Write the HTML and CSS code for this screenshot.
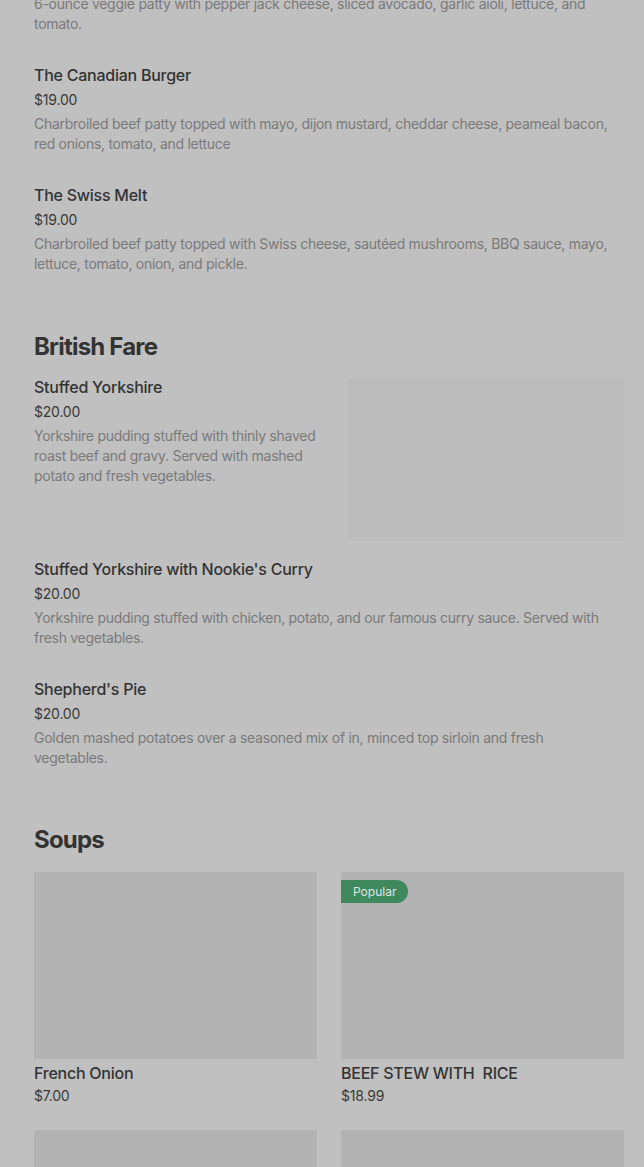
FILE: index.html
```html
<!DOCTYPE html>
<html>
<head>
<meta charset="utf-8">
<link rel="stylesheet" href="styles.css">
</head>
<body>
<main class="menu">
  <section class="section">
    <div class="item item-partial">
      <p class="desc">6-ounce veggie patty with pepper jack cheese, sliced avocado, garlic aioli, lettuce, and tomato.</p>
    </div>
    <div class="item">
      <h3 class="name">The Canadian Burger</h3>
      <div class="price">$19.00</div>
      <p class="desc">Charbroiled beef patty topped with mayo, dijon mustard, cheddar cheese, peameal bacon, red onions, tomato, and lettuce</p>
    </div>
    <div class="item">
      <h3 class="name">The Swiss Melt</h3>
      <div class="price">$19.00</div>
      <p class="desc">Charbroiled beef patty topped with Swiss cheese, sautéed mushrooms, BBQ sauce, mayo, lettuce, tomato, onion, and pickle.</p>
    </div>
  </section>

  <section class="section section-british">
    <h2 class="heading">British Fare</h2>
    <div class="item item-img">
      <div class="item-text">
        <h3 class="name">Stuffed Yorkshire</h3>
        <div class="price">$20.00</div>
        <p class="desc">Yorkshire pudding stuffed with thinly shaved roast beef and gravy. Served with mashed potato and fresh vegetables.</p>
      </div>
      <div class="thumb"></div>
    </div>
    <div class="item">
      <h3 class="name">Stuffed Yorkshire with Nookie's Curry</h3>
      <div class="price">$20.00</div>
      <p class="desc">Yorkshire pudding stuffed with chicken, potato, and our famous curry sauce. Served with fresh vegetables.</p>
    </div>
    <div class="item">
      <h3 class="name">Shepherd's Pie</h3>
      <div class="price">$20.00</div>
      <p class="desc">Golden mashed potatoes over a seasoned mix of in, minced top sirloin and fresh vegetables.</p>
    </div>
  </section>

  <section class="section section-soups">
    <h2 class="heading">Soups</h2>
    <div class="grid">
      <div class="card">
        <div class="card-img"></div>
        <h3 class="name card-name">French Onion</h3>
        <div class="price">$7.00</div>
      </div>
      <div class="card">
        <div class="card-img"><span class="badge">Popular</span></div>
        <h3 class="name card-name">BEEF STEW WITH&nbsp; RICE</h3>
        <div class="price">$18.99</div>
      </div>
      <div class="card">
        <div class="card-img"></div>
      </div>
      <div class="card">
        <div class="card-img"></div>
      </div>
    </div>
  </section>
</main>
</body>
</html>
```

FILE: styles.css
```css
* { box-sizing: border-box; }
html, body {
  margin: 0;
  padding: 0;
  background: #c0c0c0;
  overflow: hidden;
}
body {
  font-family: "Inter", "Liberation Sans", sans-serif;
  color: #333333;
}
.menu {
  padding: 0 20px 0 34px;
  margin-top: -6px;
}
.section {
  display: flex;
  flex-direction: column;
}
.section-british {
  margin-top: 28px;
}
.section-soups {
  margin-top: 27px;
}
.heading {
  margin: 0 0 12px;
  font-size: 24px;
  line-height: 32px;
  font-weight: 700;
  color: #333333;
  letter-spacing: -0.8px;
}
.section-soups .heading {
  margin-bottom: 16px;
}
.item {
  padding-bottom: 29px;
}
.name {
  margin: 0 0 3px;
  font-size: 16px;
  line-height: 24px;
  font-weight: 500;
  color: #333333;
  letter-spacing: -0.25px;
}
.price {
  font-size: 14px;
  line-height: 20px;
  color: #3a3a3a;
  margin-bottom: 4px;
  letter-spacing: -0.2px;
}
.desc {
  margin: 0;
  max-width: 578px;
  font-size: 14px;
  line-height: 20px;
  color: #7a7a7a;
  letter-spacing: -0.28px;
}
.item-img {
  display: flex;
  gap: 24px;
  padding-bottom: 20px;
  align-items: flex-start;
}
.item-text {
  flex: 1;
  min-width: 0;
}
.thumb {
  width: 276px;
  height: 159px;
  margin-top: 3px;
  background: #bcbcbc;
  flex-shrink: 0;
}
.grid {
  display: grid;
  grid-template-columns: 1fr 1fr;
  column-gap: 24px;
  row-gap: 24px;
}
.card {
  display: flex;
  flex-direction: column;
}
.card-img {
  position: relative;
  height: 187px;
  background: #b3b3b3;
}
.card-name {
  margin: 2px 0 0;
}
.card .price {
  margin: 1px 0 0;
}
.badge {
  position: absolute;
  left: 0;
  top: 8px;
  height: 23px;
  padding: 0 12px;
  display: flex;
  align-items: center;
  background: #3e8a5e;
  color: #e2e2e2;
  font-size: 12px;
  border-radius: 0 12px 12px 0;
}
```
